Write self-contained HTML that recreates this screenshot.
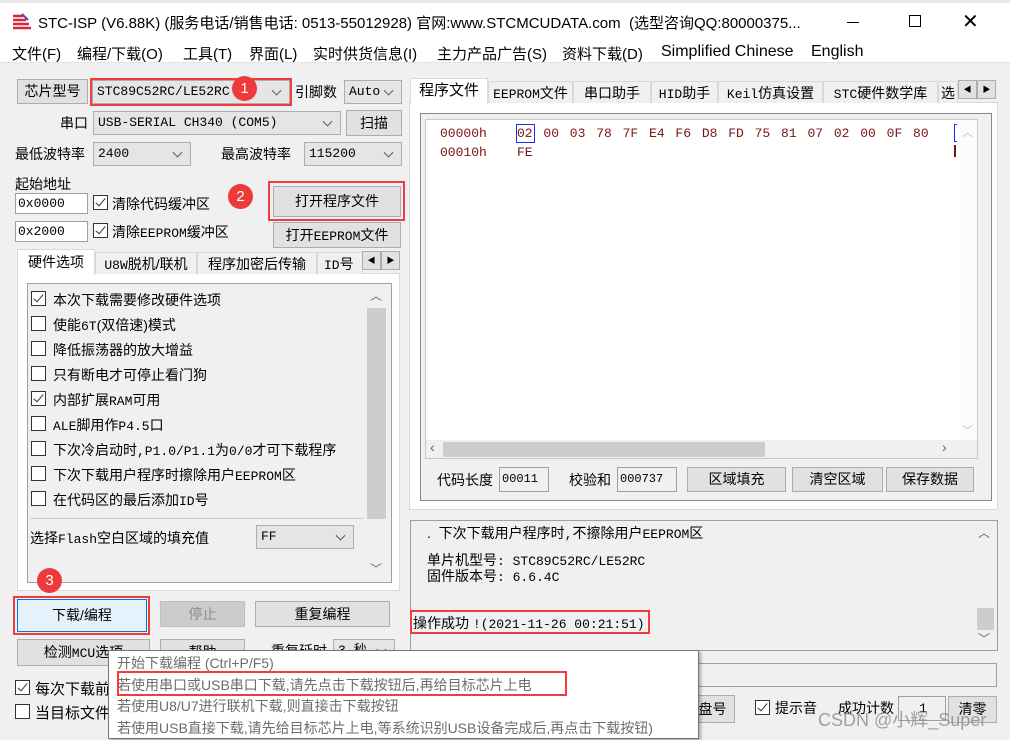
<!DOCTYPE html>
<html><head><meta charset="utf-8"><style>
*{box-sizing:border-box;margin:0;padding:0}
body{width:1010px;height:740px;background:#f0f0f0;font-family:"Liberation Sans","Noto Sans CJK SC",sans-serif;font-size:14px;color:#000;position:relative;overflow:hidden}
.a{position:absolute;white-space:nowrap}
.btn{position:absolute;background:#e1e1e1;border:1px solid #adadad;text-align:center;font-size:14px}
.combo{position:absolute;background:#e5e5e5;border:1px solid #adadad;font-family:"Liberation Mono","Noto Sans CJK SC",monospace;font-size:13px;padding-left:4px}
.combo:after{content:"";position:absolute;right:9px;top:50%;width:6px;height:6px;border-right:1px solid #555;border-bottom:1px solid #555;transform:translateY(-70%) rotate(45deg)}
.inp{position:absolute;background:#fff;border:1px solid #a0a0a0;font-family:"Liberation Mono",monospace;font-size:13px;padding-left:2px}
.chk{position:absolute;width:15px;height:15px;border:1px solid #333;background:#fff}
.chk.on:after{content:"";position:absolute;left:4px;top:0px;width:4px;height:9px;border-right:1.5px solid #333;border-bottom:1.5px solid #333;transform:rotate(40deg)}
.red{position:absolute;border:2px solid #f23c3c}
.num{position:absolute;width:25px;height:25px;border-radius:50%;background:#ee3a3a;color:#fff;text-align:center;line-height:25px;font-size:15px}
.tab{position:absolute;background:#f0f0f0;border:1px solid #d9d9d9;border-bottom:none;text-align:center;font-size:14px;line-height:22px}
.m{font-family:"Liberation Mono","Noto Sans CJK SC",monospace;font-size:13px}
</style></head><body>
<div class="a" style="left:0;top:0;width:1010px;height:3px;background:#e8e8e8"></div>
<div class="a" style="left:0;top:3px;width:1010px;height:60px;background:#fff;border-bottom:1px solid #e4e4e4"></div>
<svg class="a" style="left:12px;top:12px" width="20" height="18"><path d="M1 4h10M1 8h13M1 12h16M1 16h18" stroke="#d9263b" stroke-width="2.4"/><path d="M10 2l6 6" stroke="#6a3fb0" stroke-width="2"/></svg>
<div class="a" style="left:38px;top:12px;font-size:15px">STC-ISP (V6.88K) (服务电话/销售电话: 0513-55012928) 官网:www.STCMCUDATA.com&nbsp; (选型咨询QQ:80000375...</div>
<div class="a" style="left:847px;top:22px;width:12px;height:1px;background:#000"></div>
<div class="a" style="left:909px;top:15px;width:12px;height:12px;border:1px solid #000"></div>
<div class="a" style="left:962px;top:9px;font-size:20px;font-weight:300">✕</div>
<div class="a" style="left:12px;top:43px;font-size:15px">文件(F)</div>
<div class="a" style="left:77px;top:43px;font-size:15px">编程/下载(O)</div>
<div class="a" style="left:183px;top:43px;font-size:15px">工具(T)</div>
<div class="a" style="left:249px;top:43px;font-size:15px">界面(L)</div>
<div class="a" style="left:313px;top:43px;font-size:15px">实时供货信息(I)</div>
<div class="a" style="left:437px;top:43px;font-size:15px">主力产品广告(S)</div>
<div class="a" style="left:562px;top:43px;font-size:15px">资料下载(D)</div>
<div class="a" style="left:661px;top:43px;font-size:16px">Simplified Chinese</div>
<div class="a" style="left:811px;top:43px;font-size:16px">English</div>

<div class="btn" style="left:17px;top:79px;width:71px;height:25px;line-height:23px">芯片型号</div>
<div class="combo" style="left:92px;top:80px;width:198px;height:24px;line-height:22px">STC89C52RC/LE52RC</div>
<div class="red" style="left:90px;top:78px;width:202px;height:28px"></div>
<div class="num" style="left:232px;top:76px">1</div>
<div class="a" style="left:295px;top:82px">引脚数</div>
<div class="combo" style="left:344px;top:80px;width:58px;height:24px;line-height:22px">Auto</div>
<div class="a" style="left:60px;top:113px">串口</div>
<div class="combo" style="left:93px;top:111px;width:248px;height:24px;line-height:22px">USB-SERIAL CH340 (COM5)</div>
<div class="btn" style="left:346px;top:110px;width:56px;height:26px;line-height:24px">扫描</div>
<div class="a" style="left:15px;top:144px">最低波特率</div>
<div class="combo" style="left:93px;top:142px;width:98px;height:24px;line-height:22px">2400</div>
<div class="a" style="left:221px;top:144px">最高波特率</div>
<div class="combo" style="left:304px;top:142px;width:98px;height:24px;line-height:22px">115200</div>
<div class="a" style="left:15px;top:174px">起始地址</div>
<div class="inp" style="left:15px;top:193px;width:73px;height:21px;line-height:19px">0x0000</div>
<div class="chk on" style="left:93px;top:195px"></div>
<div class="a" style="left:112px;top:194px">清除代码缓冲区</div>
<div class="num" style="left:228px;top:184px">2</div>
<div class="btn" style="left:273px;top:186px;width:128px;height:31px;line-height:29px">打开程序文件</div>
<div class="red" style="left:268px;top:181px;width:137px;height:40px"></div>
<div class="inp" style="left:15px;top:221px;width:73px;height:21px;line-height:19px">0x2000</div>
<div class="chk on" style="left:93px;top:223px"></div>
<div class="a" style="left:112px;top:222px">清除<span class="m">EEPROM</span>缓冲区</div>
<div class="btn" style="left:273px;top:222px;width:128px;height:26px;line-height:24px">打开<span class="m">EEPROM</span>文件</div>

<div class="a" style="left:17px;top:273px;width:383px;height:318px;background:#fff;border:1px solid #d9d9d9"></div>
<div class="tab" style="left:17px;top:249px;width:78px;height:26px;background:#fff;line-height:24px">硬件选项</div>
<div class="tab" style="left:95px;top:252px;width:102px;height:22px"><span class="m">U8W</span>脱机/联机</div>
<div class="tab" style="left:197px;top:252px;width:120px;height:22px">程序加密后传输</div>
<div class="tab" style="left:317px;top:252px;width:46px;height:22px;text-align:left;overflow:hidden;padding-left:6px"><span class="m">ID</span>号批</div>
<div class="btn" style="left:362px;top:251px;width:19px;height:19px;font-size:8px;line-height:17px">◀</div>
<div class="btn" style="left:381px;top:251px;width:19px;height:19px;font-size:8px;line-height:17px">▶</div>
<div class="a" style="left:27px;top:283px;width:365px;height:300px;background:#f0f0f0;border:1px solid #a0a0a0"></div>
<div class="a" style="left:366px;top:285px;width:22px;height:296px;background:#f0f0f0"></div>
<div class="a" style="left:367px;top:308px;width:19px;height:211px;background:#cdcdcd"></div>
<div class="a" style="left:370px;top:287px;font-size:12px;color:#606060">︿</div>
<div class="a" style="left:370px;top:560px;font-size:12px;color:#606060">﹀</div>
<div class="chk on" style="left:31px;top:291px"></div><div class="a" style="left:53px;top:290px">本次下载需要修改硬件选项</div>
<div class="chk" style="left:31px;top:316px"></div><div class="a" style="left:53px;top:315px">使能<span class="m">6T</span>(双倍速)模式</div>
<div class="chk" style="left:31px;top:341px"></div><div class="a" style="left:53px;top:340px">降低振荡器的放大增益</div>
<div class="chk" style="left:31px;top:366px"></div><div class="a" style="left:53px;top:365px">只有断电才可停止看门狗</div>
<div class="chk on" style="left:31px;top:391px"></div><div class="a" style="left:53px;top:390px">内部扩展<span class="m">RAM</span>可用</div>
<div class="chk" style="left:31px;top:416px"></div><div class="a" style="left:53px;top:415px"><span class="m">ALE</span>脚用作<span class="m">P4.5</span>口</div>
<div class="chk" style="left:31px;top:441px"></div><div class="a" style="left:53px;top:440px">下次冷启动时<span class="m">,P1.0/P1.1</span>为<span class="m">0/0</span>才可下载程序</div>
<div class="chk" style="left:31px;top:466px"></div><div class="a" style="left:53px;top:465px">下次下载用户程序时擦除用户<span class="m">EEPROM</span>区</div>
<div class="chk" style="left:31px;top:491px"></div><div class="a" style="left:53px;top:490px">在代码区的最后添加<span class="m">ID</span>号</div>
<div class="a" style="left:30px;top:518px;width:334px;height:1px;background:#c8c8c8"></div>
<div class="a" style="left:30px;top:528px">选择<span class="m">Flash</span>空白区域的填充值</div>
<div class="combo" style="left:256px;top:525px;width:98px;height:24px;line-height:22px">FF</div>

<div class="btn" style="left:17px;top:599px;width:130px;height:33px;line-height:31px;background:#e5f1fb;border-color:#0078d7">下载/编程</div>
<div class="red" style="left:13px;top:596px;width:137px;height:39px"></div>
<div class="num" style="left:37px;top:568px">3</div>
<div class="btn" style="left:160px;top:601px;width:85px;height:26px;line-height:24px;background:#cccccc;border-color:#bfbfbf;color:#8d8d8d">停止</div>
<div class="btn" style="left:255px;top:601px;width:135px;height:26px;line-height:24px">重复编程</div>
<div class="btn" style="left:17px;top:639px;width:133px;height:27px;line-height:25px">检测<span class="m">MCU</span>选项</div>
<div class="btn" style="left:160px;top:639px;width:85px;height:27px;line-height:25px">帮助</div>
<div class="a" style="left:271px;top:641px">重复延时</div>
<div class="combo" style="left:333px;top:639px;width:62px;height:24px;line-height:22px">3 秒</div>
<div class="chk on" style="left:15px;top:680px"></div><div class="a" style="left:35px;top:678px;font-size:15px">每次下载前</div>
<div class="chk" style="left:15px;top:704px"></div><div class="a" style="left:35px;top:702px;font-size:15px">当目标文件</div>

<div class="a" style="left:409px;top:102px;width:589px;height:408px;background:#fff;border:1px solid #d9d9d9"></div>
<div class="tab" style="left:410px;top:78px;width:78px;height:26px;background:#fff;line-height:24px;font-size:15px">程序文件</div>
<div class="tab" style="left:488px;top:81px;width:85px;height:22px"><span class="m">EEPROM</span>文件</div>
<div class="tab" style="left:573px;top:81px;width:78px;height:22px">串口助手</div>
<div class="tab" style="left:651px;top:81px;width:67px;height:22px"><span class="m">HID</span>助手</div>
<div class="tab" style="left:718px;top:81px;width:105px;height:22px"><span class="m">Keil</span>仿真设置</div>
<div class="tab" style="left:823px;top:81px;width:115px;height:22px"><span class="m">STC</span>硬件数学库</div>
<div class="tab" style="left:938px;top:81px;width:20px;height:22px;overflow:hidden">选</div>
<div class="btn" style="left:958px;top:80px;width:19px;height:19px;font-size:8px;line-height:17px">◀</div>
<div class="btn" style="left:977px;top:80px;width:19px;height:19px;font-size:8px;line-height:17px">▶</div>
<div class="a" style="left:420px;top:113px;width:572px;height:388px;background:#f0f0f0;border:1px solid #888"></div>
<div class="a" style="left:425px;top:119px;width:553px;height:340px;background:#fff;border:1px solid #c8c8c8"></div>
<div class="a" style="left:440px;top:124px;font-family:'Liberation Mono',monospace;font-size:13px;color:#7a1414;line-height:19px">00000h<br>00010h</div>
<div class="a" style="left:517px;top:124px;font-family:'Liberation Mono',monospace;font-size:13px;color:#7a1414;line-height:19px;word-spacing:3px">02 00 03 78 7F E4 F6 D8 FD 75 81 07 02 00 0F 80<br>FE</div>
<div class="a" style="left:516px;top:124px;width:19px;height:19px;border:1px solid #1d2bff"></div>
<div class="a" style="left:954px;top:124px;width:3px;height:18px;border:1px solid #1d2bff;border-right:none"></div>
<div class="a" style="left:954px;top:145px;width:2px;height:12px;background:#7a1414"></div>
<div class="a" style="left:960px;top:120px;width:17px;height:322px;background:#fbfbfb"></div>
<div class="a" style="left:962px;top:124px;font-size:11px;color:#bbb">︿</div>
<div class="a" style="left:962px;top:422px;font-size:11px;color:#bbb">﹀</div>
<div class="a" style="left:426px;top:440px;width:551px;height:18px;background:#f0f0f0"></div>
<div class="a" style="left:443px;top:442px;width:322px;height:15px;background:#cdcdcd"></div>
<div class="a" style="left:430px;top:439px;font-size:14px;color:#606060">‹</div>
<div class="a" style="left:942px;top:439px;font-size:14px;color:#606060">›</div>
<div class="a" style="left:437px;top:470px">代码长度</div>
<div class="inp" style="left:499px;top:467px;width:50px;height:25px;line-height:23px;font-size:12px;background:#f0f0f0">00011</div>
<div class="a" style="left:569px;top:470px">校验和</div>
<div class="inp" style="left:617px;top:467px;width:60px;height:25px;line-height:23px;font-size:12px;background:#f0f0f0">000737</div>
<div class="btn" style="left:687px;top:467px;width:99px;height:25px;line-height:23px">区域填充</div>
<div class="btn" style="left:792px;top:467px;width:91px;height:25px;line-height:23px">清空区域</div>
<div class="btn" style="left:886px;top:467px;width:88px;height:25px;line-height:23px">保存数据</div>

<div class="a" style="left:410px;top:520px;width:588px;height:131px;background:#f0f0f0;border:1px solid #a0a0a0"></div>
<div class="a" style="left:975px;top:521px;width:20px;height:128px;background:#f0f0f0"></div>
<div class="a" style="left:977px;top:608px;width:17px;height:22px;background:#cdcdcd"></div>
<div class="a" style="left:978px;top:524px;font-size:12px;color:#606060">︿</div>
<div class="a" style="left:978px;top:630px;font-size:12px;color:#606060">﹀</div>
<div class="a" style="left:427px;top:523px">.&nbsp; 下次下载用户程序时<span class="m">,</span>不擦除用户<span class="m">EEPROM</span>区</div>
<div class="a" style="left:427px;top:553px;line-height:15px">单片机型号<span class="m">: STC89C52RC/LE52RC</span><br>固件版本号<span class="m">: 6.6.4C</span></div>
<div class="a" style="left:413px;top:613px">操作成功 <span class="m">!(2021-11-26 00:21:51)</span></div>
<div class="red" style="left:410px;top:610px;width:240px;height:24px"></div>
<div class="a" style="left:698px;top:663px;width:299px;height:24px;background:#f0f0f0;border:1px solid #a0a0a0"></div>
<div class="btn" style="left:690px;top:695px;width:45px;height:28px;line-height:26px">盘号</div>
<div class="chk on" style="left:755px;top:700px"></div><div class="a" style="left:775px;top:698px">提示音</div>
<div class="a" style="left:838px;top:698px">成功计数</div>
<div class="inp" style="left:898px;top:696px;width:48px;height:25px;background:#f0f0f0;text-align:center;line-height:23px">1</div>
<div class="btn" style="left:948px;top:696px;width:49px;height:27px;line-height:25px">清零</div>
<div class="a" style="left:818px;top:706px;font-size:18px;color:#8c8c8c;opacity:.8">CSDN @小辉_Super</div>

<div class="a" style="left:108px;top:650px;width:591px;height:89px;background:#fff;border:1px solid #767676;box-shadow:2px 2px 3px rgba(0,0,0,.3)"></div>
<div class="a" style="left:117px;top:653px;color:#6d6d6d;line-height:21.5px;font-size:14px">开始下载编程 (Ctrl+P/F5)<br>若使用串口或USB串口下载,请先点击下载按钮后,再给目标芯片上电<br>若使用U8/U7进行联机下载,则直接击下载按钮<br>若使用USB直接下载,请先给目标芯片上电,等系统识别USB设备完成后,再点击下载按钮)</div>
<div class="red" style="left:117px;top:671px;width:450px;height:25px"></div>
</body></html>
